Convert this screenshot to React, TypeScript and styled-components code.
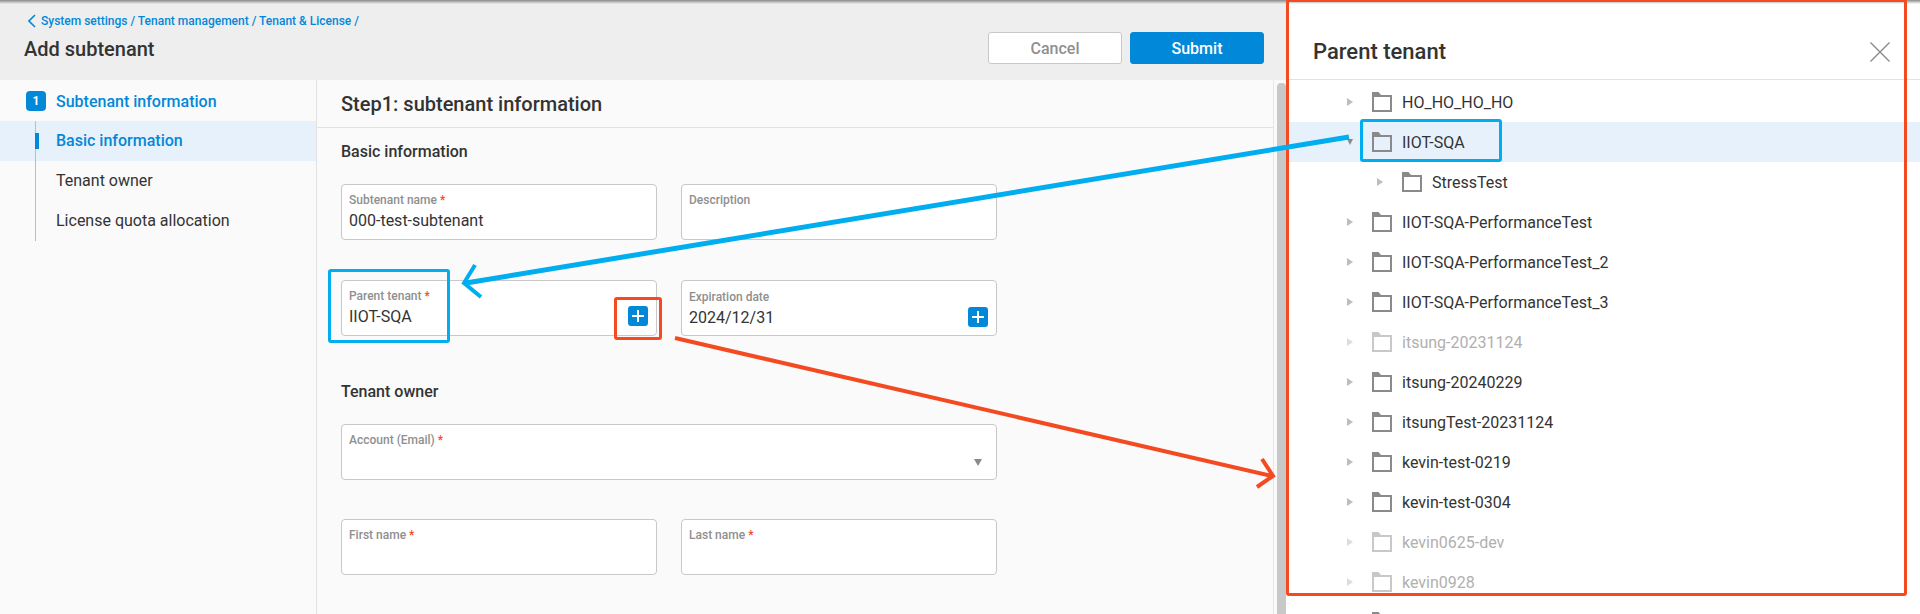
import React, { FC } from 'react';
import styled, { createGlobalStyle } from 'styled-components';

const BLUE = '#0288d9';
const CYAN = '#00aeef';
const RED = '#f44a22';

const GlobalStyle = createGlobalStyle`
  html, body {
    margin: 0;
    padding: 0;
    background: #fff;
  }
  * {
    box-sizing: border-box;
  }
`;

const Page = styled.div`
  position: relative;
  display: flex;
  width: 1920px;
  height: 614px;
  overflow: hidden;
  font-family: Roboto, 'Liberation Sans', sans-serif;
  color: #333;
  background: #fff;
  &::before {
    content: '';
    position: absolute;
    top: 0;
    left: 0;
    right: 0;
    height: 4px;
    background: linear-gradient(#8a8a8a, rgba(200, 200, 200, 0));
    z-index: 2;
  }
`;

const Main = styled.div`
  display: flex;
  flex-direction: column;
  width: 1286px;
  flex-shrink: 0;
`;

const Header = styled.header`
  display: flex;
  justify-content: space-between;
  height: 80px;
  padding: 32px 22px 0 24px;
  background: #eee;
  flex-shrink: 0;
`;

const Titles = styled.div`
  display: flex;
  flex-direction: column;
  margin-top: -18px;
`;

const Breadcrumb = styled.div`
  display: flex;
  align-items: center;
  gap: 5px;
  height: 14px;
  margin-left: 4px;
  font-size: 12px;
  font-weight: 500;
  color: ${BLUE};
`;

const PageTitle = styled.h1`
  margin: 9px 0 0;
  font-size: 20px;
  line-height: 24px;
  font-weight: 500;
  color: #333;
`;

const Actions = styled.div`
  display: flex;
  gap: 8px;
`;

const Button = styled.button<{ $primary?: boolean }>`
  width: 134px;
  height: 32px;
  padding: 0;
  border-radius: 3px;
  border: 1px solid ${(p) => (p.$primary ? BLUE : '#c8c8c8')};
  background: ${(p) => (p.$primary ? BLUE : '#fff')};
  color: ${(p) => (p.$primary ? '#fff' : '#8f8f8f')};
  font-family: inherit;
  font-size: 16px;
  font-weight: 500;
`;

const Body = styled.div`
  display: flex;
  flex: 1;
  min-height: 0;
  background: #fafafa;
`;

const Sidebar = styled.nav`
  width: 317px;
  padding-top: 11px;
  border-right: 1px solid #e2e2e2;
  flex-shrink: 0;
`;

const StepHead = styled.div`
  display: flex;
  align-items: center;
  gap: 10px;
  height: 20px;
  padding-left: 26px;
  margin-bottom: 10px;
  font-size: 16px;
  font-weight: 500;
  color: ${BLUE};
`;

const StepBadge = styled.span`
  display: flex;
  align-items: center;
  justify-content: center;
  width: 20px;
  height: 20px;
  border-radius: 4px;
  background: ${BLUE};
  color: #fff;
  font-size: 12px;
  font-weight: 700;
`;

const SubItem = styled.div<{ $active?: boolean }>`
  position: relative;
  display: flex;
  align-items: center;
  height: 40px;
  padding: 0 0 2px 56px;
  font-size: 16px;
  font-weight: ${(p) => (p.$active ? 500 : 400)};
  color: ${(p) => (p.$active ? BLUE : '#333')};
  background: ${(p) => (p.$active ? '#e7f1fb' : 'transparent')};
  &::before {
    content: '';
    position: absolute;
    left: 35px;
    top: 0;
    bottom: 0;
    width: 1px;
    background: #bdbdbd;
  }
  ${(p) =>
    p.$active &&
    `&::after {
      content: '';
      position: absolute;
      left: 35px;
      top: 12px;
      width: 4px;
      height: 16px;
      background: ${BLUE};
    }`}
`;

const Content = styled.main`
  flex: 1;
  min-width: 0;
`;

const StepTitle = styled.h2`
  display: flex;
  align-items: center;
  height: 48px;
  margin: 0;
  padding: 0 0 0 24px;
  border-bottom: 1px solid #e2e2e2;
  font-size: 20px;
  font-weight: 500;
  color: #333;
`;

const Section = styled.section<{ $top: number }>`
  padding: ${(p) => p.$top}px 0 0 24px;
`;

const SectionTitle = styled.h3`
  margin: 0 0 22px;
  font-size: 16px;
  line-height: 20px;
  font-weight: 500;
  color: #333;
`;

const FormGrid = styled.div<{ $rowGap: number }>`
  display: grid;
  grid-template-columns: 316px 316px;
  column-gap: 24px;
  row-gap: ${(p) => p.$rowGap}px;
`;

const Field = styled.div<{ $wide?: boolean; $low?: boolean }>`
  position: relative;
  height: 56px;
  padding: ${(p) => (p.$low ? 9 : 8)}px 7px 0;
  border: 1px solid #c8c8c8;
  border-radius: 4px;
  background: #fff;
  grid-column: ${(p) => (p.$wide ? '1 / -1' : 'auto')};
`;

const FieldLabel = styled.div`
  font-size: 12px;
  line-height: 14px;
  font-weight: 500;
  color: #8f8f8f;
`;

const Required = styled.span`
  color: ${RED};
  margin-left: 3px;
`;

const FieldValue = styled.div`
  margin-top: 4px;
  font-size: 16px;
  line-height: 20px;
  color: #333;
`;

const PlusButton = styled.span<{ $low?: boolean }>`
  position: absolute;
  right: 8px;
  bottom: ${(p) => (p.$low ? 8 : 9)}px;
  display: flex;
  align-items: center;
  justify-content: center;
  width: 20px;
  height: 20px;
  border-radius: 3px;
  background: ${BLUE};
`;

const SelectCaret = styled.span`
  position: absolute;
  right: 14px;
  top: 34px;
  width: 0;
  height: 0;
  border-left: 4px solid transparent;
  border-right: 4px solid transparent;
  border-top: 7px solid #8a8a8a;
`;

const Callout = styled.div<{ $red?: boolean }>`
  position: absolute;
  border: 3px solid ${(p) => (p.$red ? RED : CYAN)};
  border-radius: 3px;
  pointer-events: none;
`;

const ParentCallout = styled(Callout)`
  left: -14px;
  top: -12px;
  width: 122px;
  height: 74px;
`;

const PlusCallout = styled(Callout)`
  left: 272px;
  top: 16px;
  width: 48px;
  height: 43px;
`;

const ScrollTrack = styled.div`
  position: relative;
  width: 13px;
  border-left: 1px solid #e8e8e8;
  flex-shrink: 0;
  &::after {
    content: '';
    position: absolute;
    left: 3px;
    top: 3px;
    bottom: -20px;
    width: 9px;
    border-radius: 4px;
    background: #c8c8c8;
  }
`;

const Panel = styled.aside`
  position: relative;
  flex: 1;
  background: #fff;
`;

const PanelOutline = styled(Callout).attrs({ $red: true })`
  left: 0;
  top: -1px;
  width: 621px;
  height: 597px;
  z-index: 3;
`;

const PanelHead = styled.div`
  display: flex;
  align-items: center;
  justify-content: space-between;
  height: 80px;
  padding: 24px 30px 0 27px;
  border-bottom: 1px solid #e2e2e2;
`;

const PanelTitle = styled.h2`
  margin: 0;
  font-size: 22px;
  font-weight: 500;
  color: #333;
`;

const CloseIcon = styled.svg`
  display: block;
`;

const Tree = styled.div`
  padding-top: 2px;
`;

const TreeRow = styled.div<{ $depth?: number; $selected?: boolean; $disabled?: boolean }>`
  position: relative;
  display: flex;
  align-items: center;
  height: 40px;
  padding-left: ${(p) => 61 + (p.$depth || 0) * 30}px;
  font-size: 16px;
  color: ${(p) => (p.$disabled ? '#b0b0b0' : '#333')};
  background: ${(p) => (p.$selected ? '#e7f1fb' : 'transparent')};
`;

const Caret = styled.span<{ $open?: boolean; $disabled?: boolean }>`
  width: 0;
  height: 0;
  margin-right: 19px;
  ${(p) =>
    p.$open
      ? `border-left: 3px solid transparent;
         border-right: 3px solid transparent;
         border-top: 6px solid #8a8a8a;`
      : `border-top: 4px solid transparent;
         border-bottom: 4px solid transparent;
         border-left: 6px solid ${p.$disabled ? '#dddddd' : '#bdbdbd'};`}
`;

const FolderIcon = styled.svg`
  display: block;
  flex-shrink: 0;
  margin-right: 10px;
`;

const SelectedCallout = styled(Callout)`
  left: 74px;
  top: -3px;
  width: 142px;
  height: 43px;
`;

const ArrowLayer = styled.svg`
  position: absolute;
  left: 0;
  top: 0;
  pointer-events: none;
  z-index: 4;
`;

const Folder: FC<{ disabled?: boolean }> = ({ disabled }) => (
  <FolderIcon width="20" height="20" viewBox="0 0 20 20">
    <path
      d="M0 0h6.5L9 3h11v17H0zM2 5v13h16V5z"
      fill={disabled ? '#c8c8c8' : '#8a8a8a'}
      fillRule="evenodd"
    />
  </FolderIcon>
);

// last row is cut by the bottom edge, only its folder shows
const trees: { name: string; depth?: number; open?: boolean; selected?: boolean; disabled?: boolean }[] = [
  { name: 'HO_HO_HO_HO' },
  { name: 'IIOT-SQA', open: true, selected: true },
  { name: 'StressTest', depth: 1 },
  { name: 'IIOT-SQA-PerformanceTest' },
  { name: 'IIOT-SQA-PerformanceTest_2' },
  { name: 'IIOT-SQA-PerformanceTest_3' },
  { name: 'itsung-20231124', disabled: true },
  { name: 'itsung-20240229' },
  { name: 'itsungTest-20231124' },
  { name: 'kevin-test-0219' },
  { name: 'kevin-test-0304' },
  { name: 'kevin0625-dev', disabled: true },
  { name: 'kevin0928', disabled: true },
  { name: '' },
];

const Plus = () => (
  <svg width="12" height="12" viewBox="0 0 12 12">
    <path d="M6 0v12M0 6h12" stroke="#fff" strokeWidth="2" />
  </svg>
);

export default function App() {
  return (
    <Page>
      <GlobalStyle />
      <Main>
        <Header>
          <Titles>
            <Breadcrumb>
              <svg width="8" height="14" viewBox="0 0 8 14">
                <path d="M7 1L1 7l6 6" fill="none" stroke={BLUE} strokeWidth="1.6" />
              </svg>
              System settings / Tenant management / Tenant &amp; License /
            </Breadcrumb>
            <PageTitle>Add subtenant</PageTitle>
          </Titles>
          <Actions>
            <Button>Cancel</Button>
            <Button $primary>Submit</Button>
          </Actions>
        </Header>
        <Body>
          <Sidebar>
            <StepHead>
              <StepBadge>1</StepBadge>
              Subtenant information
            </StepHead>
            <SubItem $active>Basic information</SubItem>
            <SubItem>Tenant owner</SubItem>
            <SubItem>License quota allocation</SubItem>
          </Sidebar>
          <Content>
            <StepTitle>Step1: subtenant information</StepTitle>
            <Section $top={14}>
              <SectionTitle>Basic information</SectionTitle>
              <FormGrid $rowGap={40}>
                <Field>
                  <FieldLabel>
                    Subtenant name<Required>*</Required>
                  </FieldLabel>
                  <FieldValue>000-test-subtenant</FieldValue>
                </Field>
                <Field>
                  <FieldLabel>Description</FieldLabel>
                </Field>
                <Field>
                  <FieldLabel>
                    Parent tenant<Required>*</Required>
                  </FieldLabel>
                  <FieldValue>IIOT-SQA</FieldValue>
                  <PlusButton>
                    <Plus />
                  </PlusButton>
                  <ParentCallout />
                  <PlusCallout $red />
                </Field>
                <Field $low>
                  <FieldLabel>Expiration date</FieldLabel>
                  <FieldValue>2024/12/31</FieldValue>
                  <PlusButton $low>
                    <Plus />
                  </PlusButton>
                </Field>
              </FormGrid>
            </Section>
            <Section $top={46}>
              <SectionTitle>Tenant owner</SectionTitle>
              <FormGrid $rowGap={39}>
                <Field $wide>
                  <FieldLabel>
                    Account (Email)<Required>*</Required>
                  </FieldLabel>
                  <SelectCaret />
                </Field>
                <Field>
                  <FieldLabel>
                    First name<Required>*</Required>
                  </FieldLabel>
                </Field>
                <Field>
                  <FieldLabel>
                    Last name<Required>*</Required>
                  </FieldLabel>
                </Field>
              </FormGrid>
            </Section>
          </Content>
          <ScrollTrack />
        </Body>
      </Main>
      <Panel>
        <PanelOutline />
        <PanelHead>
          <PanelTitle>Parent tenant</PanelTitle>
          <CloseIcon width="20" height="20" viewBox="0 0 20 20">
            <path d="M0.5 0.5l19 19M19.5 0.5l-19 19" stroke="#8a8a8a" strokeWidth="1.4" fill="none" />
          </CloseIcon>
        </PanelHead>
        <Tree>
          {trees.map((t, i) => (
            <TreeRow key={i} $depth={t.depth} $selected={t.selected} $disabled={t.disabled}>
              <Caret $open={t.open} $disabled={t.disabled} />
              <Folder disabled={t.disabled} />
              {t.name}
              {t.selected && <SelectedCallout />}
            </TreeRow>
          ))}
        </Tree>
      </Panel>
      <ArrowLayer width="1920" height="614" viewBox="0 0 1920 614">
        <g fill="none" stroke={CYAN} strokeWidth="5" strokeLinejoin="miter">
          <path d="M1349 137L466 283" />
          <path d="M475 265L464 283L481 297" strokeWidth="4" />
        </g>
        <g fill="none" stroke={RED} strokeWidth="4">
          <path d="M675 338L1272 476" />
          <path d="M1262 459L1273 476L1257 487" />
        </g>
      </ArrowLayer>
    </Page>
  );
}
